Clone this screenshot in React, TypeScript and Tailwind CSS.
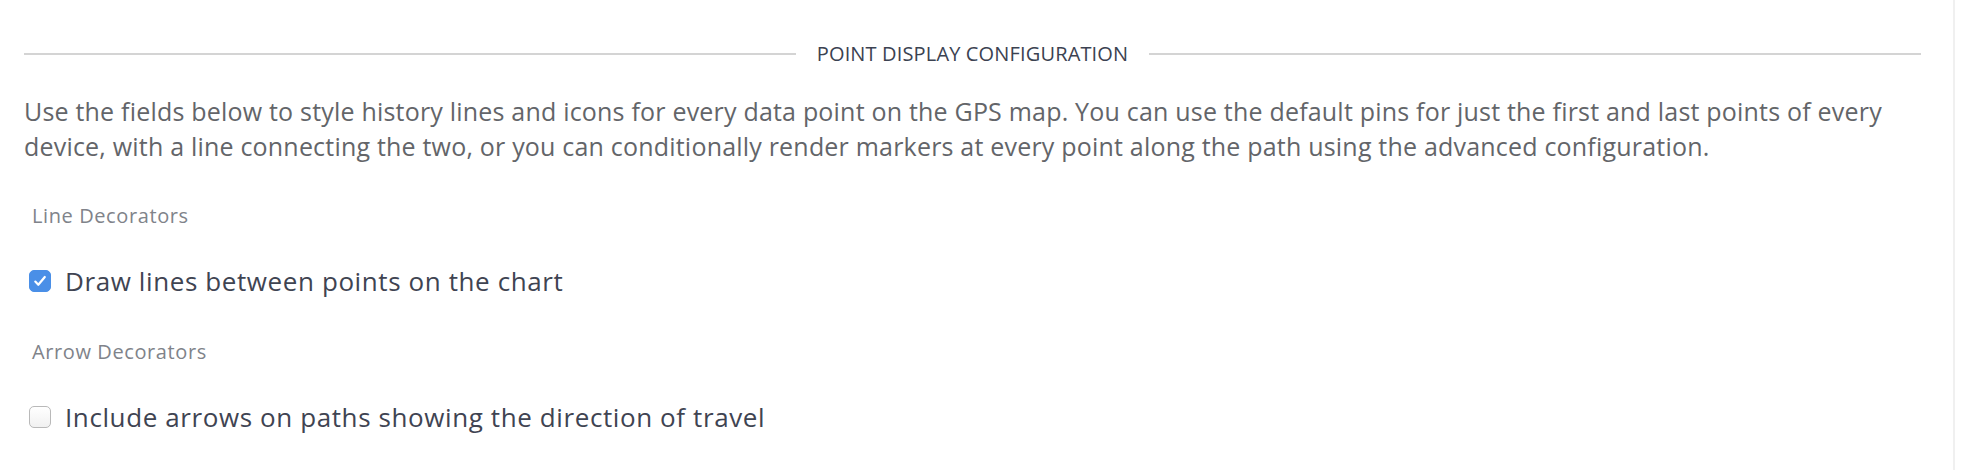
import { useState } from 'react';

const Checkbox = ({ checked, onChange }: { checked: boolean; onChange: () => void }) => (
  <button
    type="button"
    onClick={onChange}
    className={`flex h-[22px] w-[22px] shrink-0 items-center justify-center rounded-[5px] border ${
      checked ? 'border-[#4a8fe7] bg-[#4a8fe7]' : 'border-[#b9b9b9] bg-gradient-to-b from-white to-[#f1f1f1]'
    }`}
  >
    {checked && (
      <svg width="16" height="16" viewBox="0 0 16 16" fill="none">
        <path d="M3.3 8.6l3 3.2L12.8 4" stroke="white" strokeWidth="2.2" strokeLinecap="round" strokeLinejoin="round" />
      </svg>
    )}
  </button>
);

const App = () => {
  //state
  const [lines, setLines] = useState(true);
  const [arrows, setArrows] = useState(false);
  //render
  return (
    <div className="flex h-[470px] w-full bg-white font-['Open_Sans',sans-serif]">
      <main className="flex-1 pl-[24px] pr-[32px] pt-[42px]">
        <div className="flex items-center">
          <div className="h-[2px] flex-1 bg-[#d4d4d4]" />
          <h2 className="mx-[21px] text-[20px] leading-[24px] tracking-[0.15px] uppercase text-[#3b4251]">
            Point Display Configuration
          </h2>
          <div className="h-[2px] flex-1 bg-[#d4d4d4]" />
        </div>
        <p className="mt-[28px] text-[25px] leading-[35px] tracking-[0.2px] text-[#636569]">
          Use the fields below to style history lines and icons for every data point on the GPS map. You can use the default pins for just the first and last points of every device, with a line connecting the two, or you can conditionally render markers at every point along the path using the advanced configuration.
        </p>
        <div className="mt-[39px] pl-[8px] text-[20px] leading-[26px] tracking-[0.6px] text-[#80838a]">Line Decorators</div>
        <label className="mt-[35px] flex h-[34px] items-center pl-[5px]">
          <Checkbox checked={lines} onChange={() => setLines(!lines)} />
          <span className="ml-[14px] text-[26px] leading-[34px] tracking-[0.6px] text-[#3f4452]">Draw lines between points on the chart</span>
        </label>
        <div className="mt-[41px] pl-[8px] text-[20px] leading-[26px] tracking-[0.6px] text-[#80838a]">Arrow Decorators</div>
        <label className="mt-[35px] flex h-[34px] items-center pl-[5px]">
          <Checkbox checked={arrows} onChange={() => setArrows(!arrows)} />
          <span className="ml-[14px] text-[26px] leading-[34px] tracking-[0.6px] text-[#3f4452]">Include arrows on paths showing the direction of travel</span>
        </label>
      </main>
      <div className="w-[2px] bg-[#f0f0f0]" />
      <div className="w-[7px]" />
    </div>
  );
};

export default App;
